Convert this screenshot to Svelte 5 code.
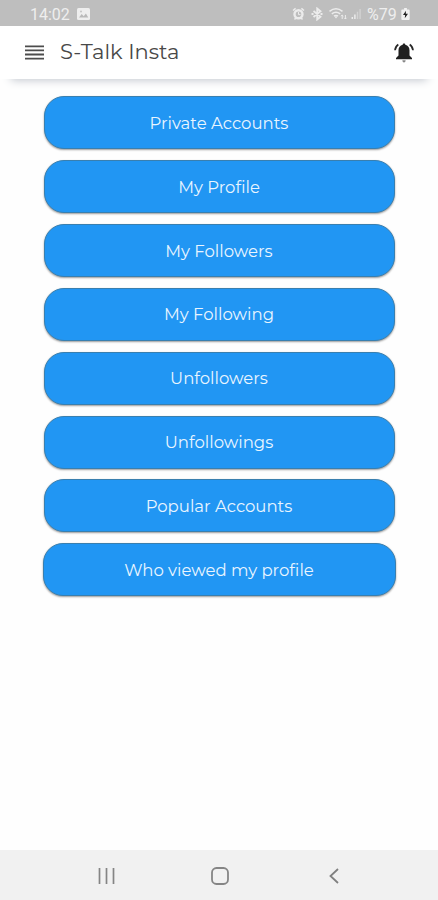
<script lang="ts">
  const items = [
    { label: 'Private Accounts' },
    { label: 'My Profile' },
    { label: 'My Followers' },
    { label: 'My Following' },
    { label: 'Unfollowers' },
    { label: 'Unfollowings' },
    { label: 'Popular Accounts' },
    { label: 'Who viewed my profile', wide: true },
  ];
</script>

<div class="phone">
  <div class="status">
    <span class="time">14:02</span>
    <svg class="picture" width="13" height="12" viewBox="0 0 13 12">
      <rect width="13" height="12" rx="1.5" fill="#eee" />
      <path d="M2 9.5 4.7 6l2 2.2L8.9 5.5 11.3 9.5z" fill="#b9b9b9" />
      <circle cx="4" cy="3.5" r="1" fill="#c4c4c4" />
    </svg>
    <svg class="signals" width="72" height="14" viewBox="0 0 72 14" fill="none" stroke="#ececec">
      <circle cx="6.5" cy="7.3" r="4" stroke-width="2.4" />
      <path d="M1 3.5 3.6 1.4M12 3.5 9.4 1.4M2.5 12.5l1.3-1.4M10.5 12.5l-1.3-1.4" stroke-width="1.5" />
      <path d="M6.5 5v2.6h2" stroke-width="1" />
      <path d="m21.5 4 7 5.8-3.3 2.7V1.5l3.3 2.7-7 5.8M19.5 7h2M28.5 7h2" stroke-width="1.8" />
      <path d="M37.5 4.3q6.5-5 13 0M39.8 6.8q4.2-3.2 8.4 0M42 9.2q2-1.5 4 0" stroke-width="1.6" />
      <path d="m42.5 9.6 1.5 2 1.5-2z" fill="#ececec" stroke="none" />
      <path d="M50.2 8v4m-1.2-2.8L50.2 8l1.2 1.2M53.4 8v4M52.2 10.8l1.2 1.2 1.2-1.2" stroke-width="1" />
      <path d="M60.3 12v-2M62.9 12V7.5" stroke-width="1.5" />
      <path d="M65.5 12V4.7M68.1 12V2" stroke="#d3d3d3" stroke-width="1.4" />
    </svg>
    <span class="percent">%79</span>
    <svg class="battery" width="9" height="12" viewBox="0 0 9 13">
      <path d="M3 0h3v1.5h2q1 0 1 1V12q0 1-1 1H1q-1 0-1-1V2.5q0-1 1-1h2z" fill="#f1f1f1" />
      <path d="M5 3 1.8 7.5h2.3L3.7 11 7.2 6.3H4.8z" fill="#222" />
    </svg>
  </div>

  <header>
    <svg class="menu" width="19" height="16" viewBox="0 0 19 16">
      <path d="M0 1.3h19M0 5.4h19M0 9.5h19M0 13.6h19" stroke="#4c4c4c" stroke-width="1.8" />
    </svg>
    <h1>S-Talk Insta</h1>
    <svg class="bell" width="20" height="20" viewBox="0 0 20 20">
      <path d="M10 0.5c-.8 0-1.3.5-1.3 1.3C6 2.4 4.5 4.5 4.5 7.3v5.2L2 15v1.2h16V15l-2.5-2.5V7.3c0-2.8-1.5-4.9-4.2-5.5 0-.8-.5-1.3-1.3-1.3z" fill="#202020" />
      <path d="M8.3 17.3h3.4q-.2 2.2-1.7 2.2t-1.7-2.2z" fill="#888" />
      <path d="M1 7.3Q1.3 3.5 4.3 1.5M19 7.3Q18.7 3.5 15.7 1.5" fill="none" stroke="#292929" stroke-width="1.7" />
    </svg>
  </header>

  <main>
    {#each items as item}
      <button class:wide={item.wide}>{item.label}</button>
    {/each}
  </main>

  <nav>
    <svg width="17" height="18" viewBox="0 0 17 18">
      <path d="M1.5 1v16M8.5 1v16M15.5 1v16" stroke="#858585" stroke-width="1.7" />
    </svg>
    <svg class="home" width="18" height="18" viewBox="0 0 18 18">
      <rect x="1" y="1" width="16" height="16" rx="4.5" fill="none" stroke="#858585" stroke-width="1.8" />
    </svg>
    <svg width="10" height="16" viewBox="0 0 10 16">
      <path d="M9 1 1.5 8 9 15" fill="none" stroke="#808080" stroke-width="1.8" />
    </svg>
  </nav>
</div>

<style>
  :global(body) {
    margin: 0;
    background: #fefefe;
  }

  .phone {
    display: flex;
    flex-direction: column;
    height: 900px;
    background: #fefefe;
    font-family: Montserrat, Inter, sans-serif;
  }

  svg {
    display: block;
    flex: none;
  }

  .status {
    display: flex;
    align-items: center;
    height: 26px;
    padding: 2px 28px 0 30px;
    box-sizing: border-box;
    background: #bebebe;
    color: #eee;
    font: 16px Roboto, sans-serif;
  }

  .time {
    width: 39px;
  }

  .picture {
    margin-left: 8px;
  }

  .signals {
    margin-left: auto;
  }

  .percent {
    width: 30px;
    margin-left: 3px;
  }

  .battery {
    margin-left: 4px;
  }

  header {
    display: flex;
    align-items: center;
    height: 53px;
    padding: 0 24px 0 25px;
    margin-bottom: 17.4px;
    background: #fff;
    box-shadow: 0 12px 10px -11px #bfc4cc;
  }

  h1 {
    flex: 1;
    margin: 0 0 2px 16px;
    color: #484848;
    font-size: 21px;
    font-weight: 400;
  }

  main {
    display: flex;
    flex: 1;
    flex-direction: column;
    align-items: center;
    gap: 10.85px;
  }

  button {
    width: 351px;
    height: 53px;
    padding: 0;
    border: 1px solid #397faf;
    border-radius: 20px;
    background: #2196f3;
    box-shadow: 0 1px 2px #9b9b9b;
    color: #e9f5ff;
    font: inherit;
    font-size: 16.5px;
  }

  .wide {
    width: 353px;
  }

  nav {
    display: flex;
    align-items: center;
    justify-content: space-between;
    height: 50px;
    padding: 2px 99px 0 98px;
    box-sizing: border-box;
    background: #f1f1f1;
  }

  .home {
    margin-right: 4px;
  }
</style>
